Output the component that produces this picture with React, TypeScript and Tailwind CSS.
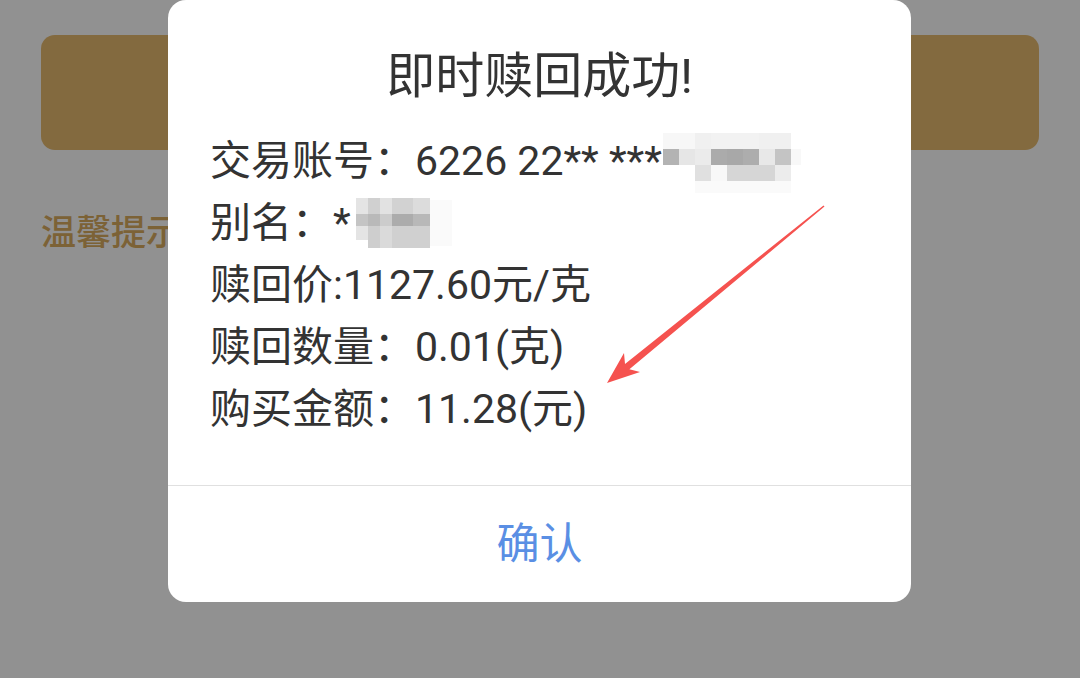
import React from "react";

type Block = [number, number, number, number, string];

// mosaic over the account number (page coordinates)
const accountMosaic: Block[] = [
  [663, 133, 32, 16, "#f7f7f7"],
  [695, 133, 16, 16, "#f0f0f0"],
  [711, 133, 48, 16, "#f2f2f2"],
  [759, 133, 32, 16, "#f0f0f0"],
  [663, 149, 16, 16, "#b3b3b3"],
  [679, 149, 16, 16, "#e6e6e6"],
  [695, 149, 16, 16, "#ebebeb"],
  [711, 149, 16, 16, "#ababab"],
  [727, 149, 16, 16, "#a8a8a8"],
  [743, 149, 16, 16, "#adadad"],
  [759, 149, 16, 16, "#e8e8e8"],
  [775, 149, 16, 16, "#c4c4c4"],
  [791, 149, 10, 16, "#f8f8f8"],
  [695, 165, 16, 16, "#e0e0e0"],
  [711, 165, 16, 16, "#f8f8f8"],
  [727, 165, 48, 16, "#d6d6d6"],
  [775, 165, 16, 16, "#ececec"],
  [695, 181, 96, 12, "#fafafa"],
];

// mosaic over the alias
const aliasMosaic: Block[] = [
  [356, 198, 12, 16, "#e4e4e4"],
  [368, 198, 12, 16, "#d0d0d0"],
  [380, 198, 12, 16, "#e2e2e2"],
  [392, 198, 21, 16, "#d2d2d2"],
  [413, 198, 17, 16, "#dcdcdc"],
  [356, 214, 12, 12, "#c4c4c4"],
  [368, 214, 12, 12, "#b9b9b9"],
  [380, 214, 12, 12, "#cccccc"],
  [392, 214, 21, 12, "#acacac"],
  [413, 214, 17, 12, "#b8b8b8"],
  [356, 226, 12, 14, "#e4e4e4"],
  [368, 226, 12, 22, "#cecece"],
  [380, 226, 12, 22, "#dadada"],
  [392, 226, 38, 22, "#d0d0d0"],
  [430, 200, 22, 46, "#fafafa"],
];

function Mosaic({ blocks }: { blocks: Block[] }) {
  return (
    <>
      {blocks.map(([x, y, w, h, c], i) => (
        <div
          key={i}
          className="absolute blur-[0.6px]"
          style={{ left: x, top: y, width: w, height: h, background: c }}
        />
      ))}
    </>
  );
}

const rows = [
  "交易账号：6226 22** ***",
  "别名：*",
  "赎回价:1127.60元/克",
  "赎回数量：0.01(克)",
  "购买金额：11.28(元)",
];

export default function App() {
  return (
    <div
      className="relative w-[1080px] h-[678px] overflow-hidden bg-[#919191]"
      style={{ fontFamily: 'Roboto, "Noto Sans CJK SC", sans-serif' }}
    >
      {/* page behind the mask */}
      <div className="px-[41px] pt-[35px]">
        <div className="h-[115px] rounded-[14px] bg-[#836a3f]" />
        <div className="mt-[64px] text-[35px] leading-[40px] font-medium text-[#7c6236]">
          温馨提示
        </div>
      </div>

      {/* dialog */}
      <div className="absolute inset-0 flex justify-center">
        <div className="w-[743px] h-[602px] ml-[-1px] bg-white rounded-[18px] flex flex-col">
          <div className="pt-[47px] text-center text-[49px] leading-[60px] text-[#333333]">
            即时赎回成功!
          </div>
          <div className="mt-[23px] pl-[42px] pb-[45px] flex flex-col text-[41px] leading-[62px] text-[#333333]">
            {rows.map((r) => (
              <div key={r} className="whitespace-pre">
                {r}
              </div>
            ))}
          </div>
          <div className="flex-1 border-t border-[#e0e0e0] flex items-center justify-center text-[43px] text-[#5a8fe4]">
            确认
          </div>
        </div>
      </div>

      <Mosaic blocks={accountMosaic} />
      <Mosaic blocks={aliasMosaic} />

      {/* annotation arrow */}
      <svg className="absolute inset-0" width="1080" height="678" viewBox="0 0 1080 678">
        <polygon
          points="823.5,205.4 625,363.9 624,353 607,383 640,372 629.4,369.3 824.5,206.6"
          fill="#f5524f"
        />
      </svg>
    </div>
  );
}
